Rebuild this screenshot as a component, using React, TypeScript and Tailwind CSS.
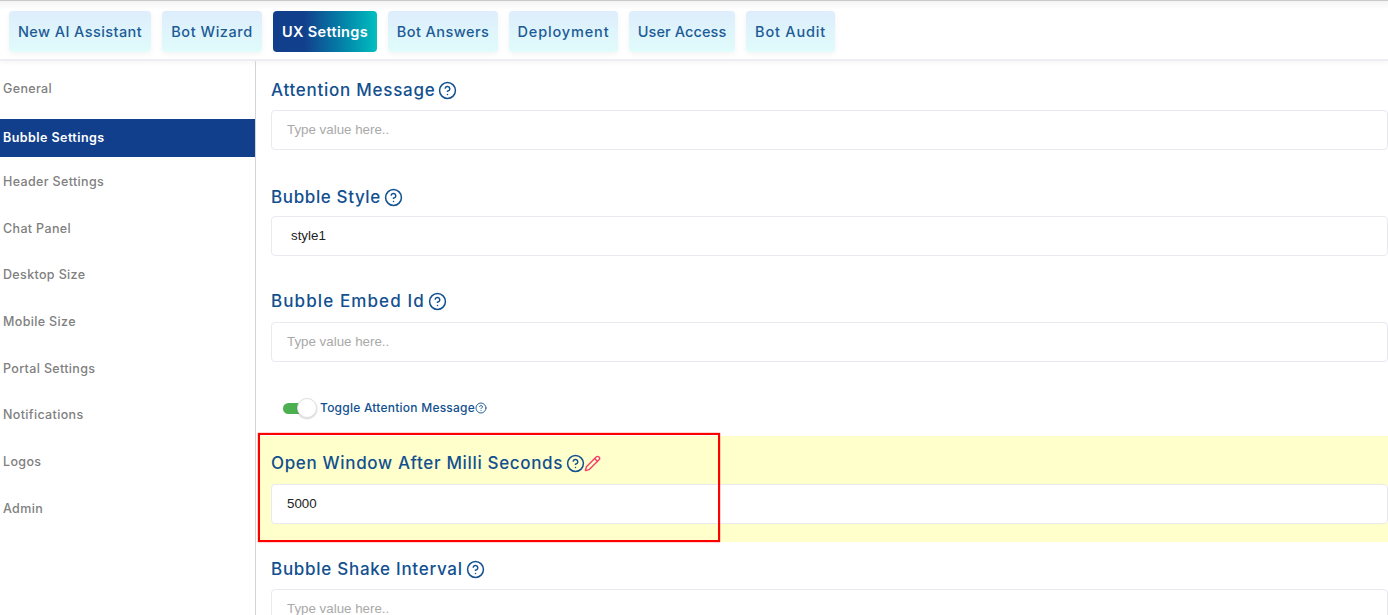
import React from "react";
import { CircleHelp, Pencil } from "lucide-react";

const tabs: [string, string, string][] = [
  ["New AI Assistant", "w-[142px]", "tracking-[0.42px]"],
  ["Bot Wizard", "w-[100px]", "tracking-[0.55px]"],
  ["UX Settings", "w-[104px]", "tracking-[0.35px]"],
  ["Bot Answers", "w-[110px]", "tracking-[0.45px]"],
  ["Deployment", "w-[109px]", "tracking-[0.85px]"],
  ["User Access", "w-[106px]", "tracking-[0.1px]"],
  ["Bot Audit", "w-[89px]", "tracking-[0.8px]"],
];
const inter = "font-['Inter','Noto_Sans',sans-serif]";
const arial = "font-['Liberation_Sans',Arial,sans-serif]";

function Tab({ label, w, track }: { label: string; w: string; track: string }) {
  const active = label === "UX Settings";
  return (
    <div
      className={`${w} ${track} h-[41px] shrink-0 flex items-center justify-center rounded text-[14.5px] ${
        active
          ? "bg-gradient-to-r from-[#123f8c] from-30% to-[#03bfbf] text-white font-semibold"
          : "bg-gradient-to-b from-[#deedfc] to-[#e0fcfb] text-[#1d5b96] font-medium shadow-[0_2px_6px_rgba(0,0,0,0.05)]"
      }`}
    >
      {label}
    </div>
  );
}

function Field({
  title,
  value,
  mt,
  gap,
  track,
  edit,
  lift,
}: {
  title: string;
  value?: string;
  mt: string;
  gap: string;
  track: string;
  edit?: boolean;
  lift?: boolean;
}) {
  return (
    <div className={`${mt} shrink-0`}>
      <div className={`${track} flex items-center h-[24px] text-[#12508f] text-[17px] font-medium`}>
        <span>{title}</span>
        <CircleHelp className="ml-[3px] mb-[2px] w-[19px] h-[19px]" strokeWidth={1.9} />
        {edit && <Pencil className="-ml-[1px] mb-[1px] w-[17px] h-[17px] text-[#f4406a]" strokeWidth={2} />}
      </div>
      <div
        className={`${arial} ${gap} h-[40px] rounded border border-[#e9e9f0] bg-white flex items-center text-[13.333px] ${
          value === "style1" ? "pl-[19px]" : "pl-[15px]"
        } ${lift ? "pb-[1px]" : ""} ${value ? "text-[#222]" : "text-[#a9a9a9]"}`}
      >
        {value ?? "Type value here.."}
      </div>
    </div>
  );
}

const side = ["Header Settings", "Chat Panel", "Desktop Size", "Mobile Size", "Portal Settings", "Notifications", "Logos", "Admin"];

export default function App() {
  return (
    <div className={`${inter} relative w-[1388px] h-[615px] overflow-hidden bg-white flex flex-col`}>
      <header className="h-[61px] shrink-0 border-t border-[#c9c9c9] bg-gradient-to-b from-[#f4f4f4] from-0% to-white to-15% flex items-start gap-[11px] pl-[9px] pt-[10px] border-b-2 border-b-[#eeeef2] shadow-[0_2px_5px_rgba(0,0,0,0.04)]">
        {tabs.map(([l, w, t]) => (
          <Tab key={l} label={l} w={w} track={t} />
        ))}
      </header>
      <div className="flex flex-1 min-h-0">
        <aside className="w-[256px] shrink-0 border-r border-[#d4d4d4] pt-[17px] text-[12.5px] font-medium text-[#808080] tracking-[0.35px]">
          <div className="h-[22px] pl-[3px] flex items-center">General</div>
          <div className="mt-[19px] h-[38px] w-[255px] pl-[3px] flex items-center bg-[#123f8c] text-white font-semibold tracking-[0.45px]">Bubble Settings</div>
          <div className="mt-[2px]">
            {side.map((s) => (
              <div key={s} className="h-[46.7px] pl-[3px] flex items-center">
                {s}
              </div>
            ))}
          </div>
        </aside>
        <main className="flex-1 min-w-0 flex flex-col">
          <div className="pl-[15px] flex flex-col">
            <Field title="Attention Message" mt="mt-[18px]" gap="mt-[7px]" track="tracking-[0.74px]" />
            <Field title="Bubble Style" value="style1" mt="mt-[36px]" gap="mt-[6px]" track="tracking-[0.62px]" />
            <Field title="Bubble Embed Id" mt="mt-[34px]" gap="mt-[8px]" track="tracking-[1.1px]" />
            <div className="mt-[35px] h-[22px] flex items-center pl-[12px] shrink-0">
              <div className="relative w-[34px] h-[22px] flex items-center">
                <div className="w-[24px] h-[11px] rounded-full bg-[#4caf50]" />
                <div className="absolute left-[14px] top-[1px] w-[20px] h-[20px] rounded-full bg-white border border-[#e3dfe3] shadow-[0_1px_2px_rgba(0,0,0,0.2)]" />
              </div>
              <span className="ml-[3px] text-[12px] font-medium text-[#12508f] tracking-[0.23px]">Toggle Attention Message</span>
              <CircleHelp className="mb-[1px] w-[12px] h-[12px] text-[#12508f]" strokeWidth={1.8} />
            </div>
          </div>
          <div className="mt-[17px] ml-[4px] pl-[11px] h-[106px] bg-[#ffffcc] shrink-0 flex flex-col">
            <Field title="Open Window After Milli Seconds" value="5000" mt="mt-[16px]" gap="mt-[8px]" track="tracking-[0.66px]" edit lift />
          </div>
          <div className="pl-[15px]">
            <Field title="Bubble Shake Interval" mt="mt-[16px]" gap="mt-[7px]" track="tracking-[0.72px]" />
          </div>
        </main>
      </div>
      <div className="absolute left-[258px] top-[433px] w-[462px] h-[109px] border-2 border-[#ff0000] shadow-[0_0_1px_#ff0000] pointer-events-none" />
    </div>
  );
}
